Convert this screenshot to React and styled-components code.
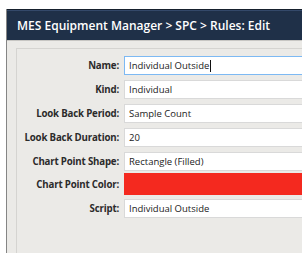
import React from "react";
import styled, { createGlobalStyle } from "styled-components";

const GlobalStyle = createGlobalStyle`
  html, body { margin: 0; padding: 0; background: #ffffff; overflow: hidden; }
  body { font-family: "Open Sans", "Noto Sans", sans-serif; }
`;

const Frame = styled.div`
  margin: 9px 0 0 6px;
  width: 380px;
  height: 244px;
  border-left: 1px solid #858585;
  display: flex;
  flex-direction: column;
  background: #ebeae7;
`;

const Header = styled.div`
  height: 30px;
  background: #1f3048;
  border-top: 1px solid #16202d;
  box-shadow: inset 0 1px 0 #34496a;
  border-bottom: 1px solid #c7c6c3;
  display: flex;
  align-items: center;
  padding-left: 10px;
  color: #ffffff;
  font-size: 12px;
  font-weight: 600;
  white-space: nowrap;
`;

const Body = styled.div`
  flex: 1;
  padding: 7px 0 0 9px;
  display: flex;
`;

const Panel = styled.div`
  flex: 1;
  border-left: 1px solid #d5d4d1;
  border-top: 1px solid #d5d4d1;
  padding-top: 7px;
  display: flex;
  flex-direction: column;
`;

const Row = styled.div`
  display: grid;
  grid-template-columns: 103px 1fr;
  column-gap: 4px;
  align-items: center;
  margin-top: ${(p) => p.$gap}px;
`;

const Label = styled.div`
  text-align: right;
  padding-right: 1px;
  font-size: 9.7px;
  font-weight: 700;
  letter-spacing: -0.18px;
  color: #2b2b2b;
  white-space: nowrap;
`;

const Field = styled.div`
  height: 19px;
  box-sizing: border-box;
  background: #ffffff;
  border: 1px solid ${(p) => (p.$focused ? "#7db9f3" : "#d9d9d9")};
  display: flex;
  align-items: center;
  padding-left: 4px;
  font-size: 9.5px;
  color: #222222;
  white-space: nowrap;
`;

const Caret = styled.span`
  display: inline-block;
  width: 1px;
  height: 12px;
  background: #111111;
  margin-left: 1px;
`;

const Swatch = styled.div`
  height: 22px;
  background: ${(p) => p.$color};
`;

const rows = [
  { label: "Name:", value: "Individual Outside", focused: true, gap: 0 },
  { label: "Kind:", value: "Individual", gap: 5 },
  { label: "Look Back Period:", value: "Sample Count", gap: 5 },
  { label: "Look Back Duration:", value: "20", gap: 5 },
  { label: "Chart Point Shape:", value: "Rectangle (Filled)", gap: 5 },
  { label: "Chart Point Color:", color: "#f4291f", gap: 2 },
  { label: "Script:", value: "Individual Outside", gap: 4 },
];

export default function App() {
  return (
    <>
      <GlobalStyle />
      <Frame>
        <Header>MES Equipment Manager &gt; SPC &gt; Rules: Edit</Header>
        <Body>
          <Panel>
            {rows.map((r) => (
              <Row key={r.label} $gap={r.gap}>
                <Label>{r.label}</Label>
                {r.color ? (
                  <Swatch $color={r.color} />
                ) : (
                  <Field $focused={r.focused}>
                    {r.value}
                    {r.focused && <Caret />}
                  </Field>
                )}
              </Row>
            ))}
          </Panel>
        </Body>
      </Frame>
    </>
  );
}
